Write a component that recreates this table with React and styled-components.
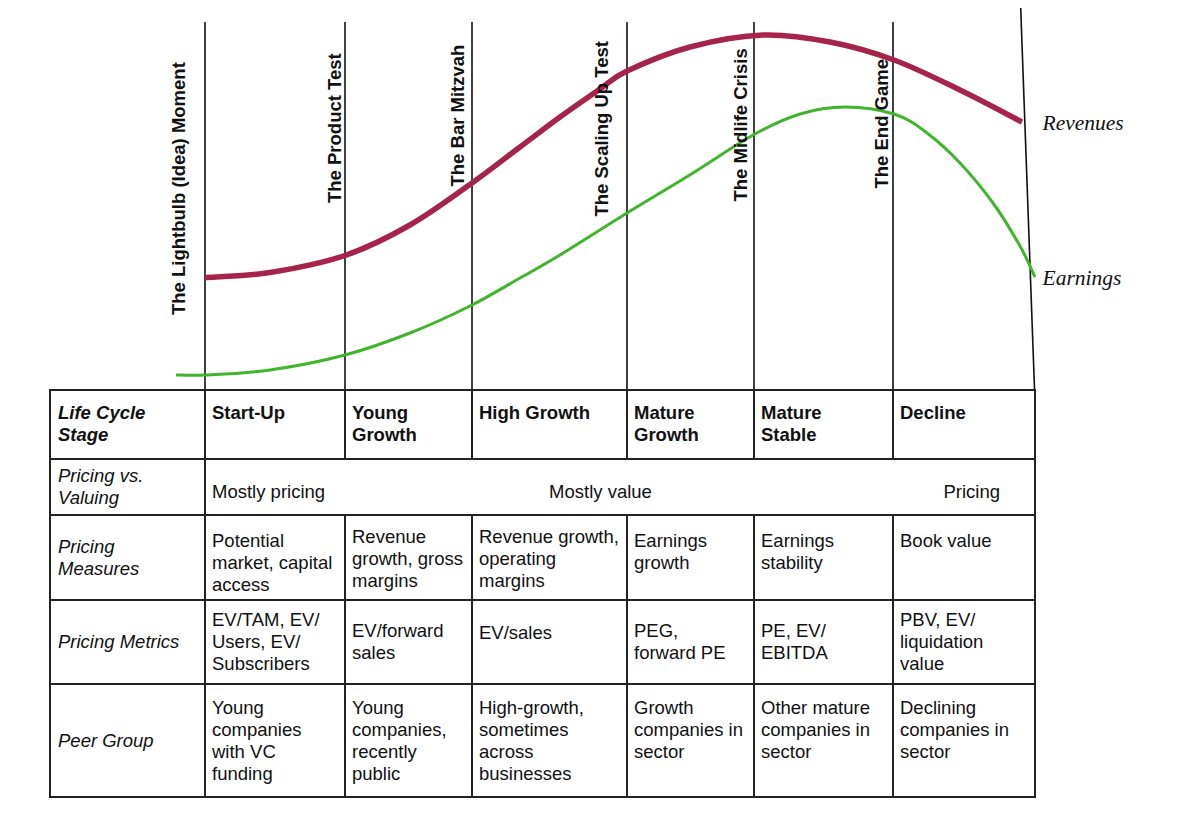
import React from "react";
import styled, { createGlobalStyle } from "styled-components";

const Global = createGlobalStyle`
  html, body { margin: 0; padding: 0; background: #fff; }
  body { font-family: "Liberation Sans", Arial, sans-serif; color: #111; }
`;

const Page = styled.div`
  width: 1200px;
  height: 822px;
  background: #fff;
  display: flex;
  flex-direction: column;
`;

const Chart = styled.svg`
  display: block;
  width: 1200px;
  height: 389px;
  flex: none;
`;

const TableArea = styled.div`
  padding-left: 49px;
`;

const Grid = styled.div`
  display: grid;
  grid-template-columns: 155px 140px 127px 155px 127px 139px 142px;
  grid-template-rows: 69px 56px 85px 84px 113px;
  width: 987px;
  box-sizing: border-box;
  border-top: 2px solid #222;
  border-left: 2px solid #222;
  font-family: "Liberation Sans", Arial, sans-serif;
  font-size: 18.5px;
  line-height: 22px;
  color: #111;
`;

const BaseCell = styled.div`
  box-sizing: border-box;
  border-right: 2px solid #222;
  border-bottom: 2px solid #222;
  display: flex;
  flex-direction: column;
  white-space: nowrap;
  overflow: hidden;
`;

const RowLabel = styled(BaseCell)`
  padding: 0 4px 0 7px;
  justify-content: ${(p) => (p.$top ? "flex-start" : "center")};
  padding-top: ${(p) => (p.$top ? "11px" : "0")};
  font-style: italic;
  font-weight: ${(p) => (p.$bold ? 700 : 400)};
`;

const StageCell = styled(BaseCell)`
  padding: 11px 4px 0 6px;
  font-weight: 700;
`;

const ValueCell = styled(BaseCell)`
  padding: ${(p) => (p.$center ? 0 : p.$pt)}px 4px 0 6px;
  justify-content: ${(p) => (p.$center ? "center" : "flex-start")};
`;

const SpanCell = styled(BaseCell)`
  grid-column: 2 / span 6;
  flex-direction: row;
  align-items: flex-start;
  padding: 21px 34px 0 6px;
`;

const MiddleNote = styled.span`
  margin-left: 224px;
`;

const RightNote = styled.span`
  margin-left: auto;
`;

const Lines = ({ lines }) =>
  lines.map((l, i) => <span key={i}>{l}</span>);

const stages = [
  ["Start-Up"],
  ["Young", "Growth"],
  ["High Growth"],
  ["Mature", "Growth"],
  ["Mature", "Stable"],
  ["Decline"],
];

const measures = [
  { lines: ["Potential", "market, capital", "access"], pt: 14 },
  { lines: ["Revenue", "growth, gross", "margins"], pt: 10 },
  { lines: ["Revenue growth,", "operating", "margins"], pt: 10 },
  { lines: ["Earnings", "growth"], pt: 14 },
  { lines: ["Earnings", "stability"], pt: 14 },
  { lines: ["Book value"], pt: 14 },
];

const metrics = [
  { lines: ["EV/TAM, EV/", "Users, EV/", "Subscribers"], center: true },
  { lines: ["EV/forward", "sales"], center: true },
  { lines: ["EV/sales"], pt: 21 },
  { lines: ["PEG,", "forward PE"], center: true },
  { lines: ["PE, EV/", "EBITDA"], center: true },
  { lines: ["PBV, EV/", "liquidation", "value"], center: true },
];

const peers = [
  { lines: ["Young", "companies", "with VC", "funding"], pt: 12 },
  { lines: ["Young", "companies,", "recently", "public"], pt: 12 },
  { lines: ["High-growth,", "sometimes", "across", "businesses"], pt: 12 },
  { lines: ["Growth", "companies in", "sector"], pt: 12 },
  { lines: ["Other mature", "companies in", "sector"], pt: 12 },
  { lines: ["Declining", "companies in", "sector"], pt: 12 },
];

function smoothPath(pts) {
  let d = `M${pts[0][0]},${pts[0][1]}`;
  for (let i = 0; i < pts.length - 1; i++) {
    const p0 = pts[i - 1] || pts[i];
    const p1 = pts[i];
    const p2 = pts[i + 1];
    const p3 = pts[i + 2] || p2;
    const c1x = p1[0] + (p2[0] - p0[0]) / 6;
    const c1y = p1[1] + (p2[1] - p0[1]) / 6;
    const c2x = p2[0] - (p3[0] - p1[0]) / 6;
    const c2y = p2[1] - (p3[1] - p1[1]) / 6;
    d += ` C${c1x.toFixed(1)},${c1y.toFixed(1)} ${c2x.toFixed(1)},${c2y.toFixed(1)} ${p2[0]},${p2[1]}`;
  }
  return d;
}

const revenuePts = [
  [205, 277.5], [270, 272.5], [345, 255.5], [410, 225], [472, 183],
  [520, 147], [560, 117], [600, 89], [627, 71], [690, 47], [763, 35],
  [830, 42], [894, 60], [960, 90], [1022, 122],
];

const earningsPts = [
  [176, 375], [205, 375], [270, 370], [345, 355], [410, 333], [472, 305],
  [520, 278], [560, 255], [627, 213], [693, 173], [753, 135], [800, 114],
  [845, 107], [894, 114], [927, 133], [960, 163], [993, 203], [1020, 246],
  [1035, 277],
];

const dividers = [205, 345, 472, 627, 754, 893];

const milestones = [
  { text: "The Lightbulb (Idea) Moment", x: 184.5, y: 315 },
  { text: "The Product Test", x: 340.5, y: 203 },
  { text: "The Bar Mitzvah", x: 464, y: 186.5 },
  { text: "The Scaling Up Test", x: 607.5, y: 216.5 },
  { text: "The Midlife Crisis", x: 747, y: 201.5 },
  { text: "The End Game", x: 887.5, y: 188.5 },
];

export default function App() {
  return (
    <Page>
      <Global />
      <Chart viewBox="0 0 1200 389" xmlns="http://www.w3.org/2000/svg">
        {dividers.map((x) => (
          <line key={x} x1={x} y1={22} x2={x} y2={389} stroke="#111" strokeWidth="1.6" />
        ))}
        <line x1={1020.7} y1={8} x2={1034.5} y2={389} stroke="#111" strokeWidth="1.6" />
        <path d={smoothPath(earningsPts)} fill="none" stroke="#3fb52c" strokeWidth="3" />
        <path d={smoothPath(revenuePts)} fill="none" stroke="#a6234c" strokeWidth="5.5" />
        {milestones.map((m) => (
          <text
            key={m.text}
            transform={`translate(${m.x},${m.y}) rotate(-90)`}
            fontFamily='"Liberation Sans", Arial, sans-serif'
            fontWeight="700"
            fontSize="18.5"
            fill="#111"
          >
            {m.text}
          </text>
        ))}
        <text x="1042.5" y="129.5" fontFamily='"Liberation Serif", "Times New Roman", serif' fontStyle="italic" fontSize="21.5" fill="#111">
          Revenues
        </text>
        <text x="1042.5" y="285" fontFamily='"Liberation Serif", "Times New Roman", serif' fontStyle="italic" fontSize="21.5" fill="#111">
          Earnings
        </text>
      </Chart>
      <TableArea>
        <Grid>
          <RowLabel $top $bold>
            <Lines lines={["Life Cycle", "Stage"]} />
          </RowLabel>
          {stages.map((s, i) => (
            <StageCell key={i}>
              <Lines lines={s} />
            </StageCell>
          ))}

          <RowLabel>
            <Lines lines={["Pricing vs.", "Valuing"]} />
          </RowLabel>
          <SpanCell>
            <span>Mostly pricing</span>
            <MiddleNote>Mostly value</MiddleNote>
            <RightNote>Pricing</RightNote>
          </SpanCell>

          <RowLabel>
            <Lines lines={["Pricing", "Measures"]} />
          </RowLabel>
          {measures.map((c, i) => (
            <ValueCell key={i} $pt={c.pt}>
              <Lines lines={c.lines} />
            </ValueCell>
          ))}

          <RowLabel>
            <Lines lines={["Pricing Metrics"]} />
          </RowLabel>
          {metrics.map((c, i) => (
            <ValueCell key={i} $pt={c.pt} $center={c.center}>
              <Lines lines={c.lines} />
            </ValueCell>
          ))}

          <RowLabel>
            <Lines lines={["Peer Group"]} />
          </RowLabel>
          {peers.map((c, i) => (
            <ValueCell key={i} $pt={c.pt}>
              <Lines lines={c.lines} />
            </ValueCell>
          ))}
        </Grid>
      </TableArea>
    </Page>
  );
}
